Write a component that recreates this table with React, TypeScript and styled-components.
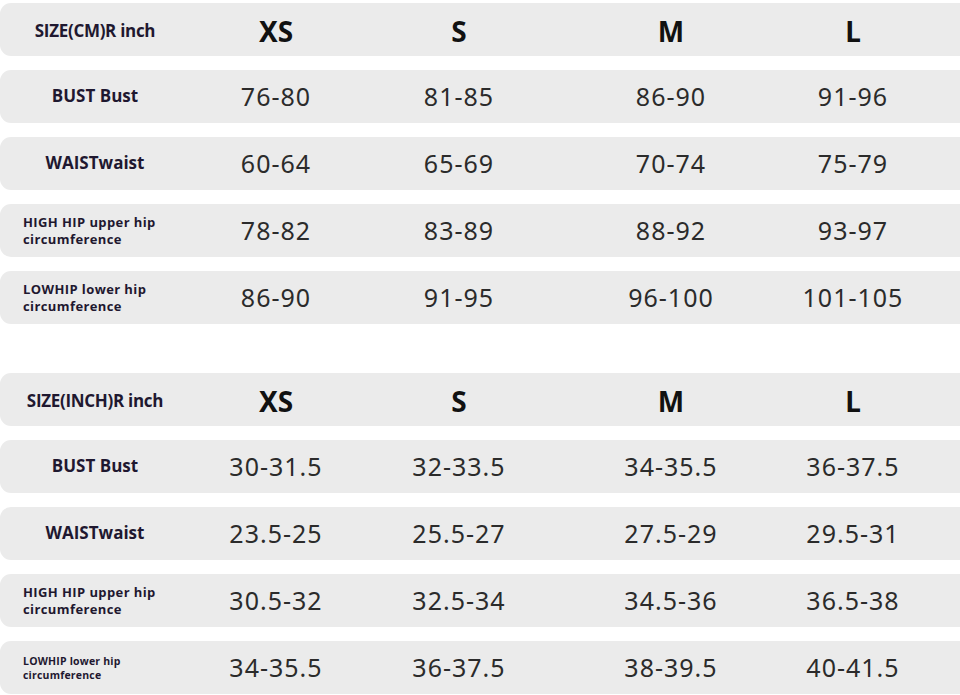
import React from "react";
import styled, { createGlobalStyle } from "styled-components";

type Row = {
  label: string[];
  size?: "lg" | "md" | "sm" | "xs";
  align?: "center" | "left";
  values: string[];
};

type Table = {
  title: string;
  rows: Row[];
};

const sizes = ["XS", "S", "M", "L"];

const tables: Table[] = [
  {
    title: "SIZE(CM)R inch",
    rows: [
      { label: ["BUST Bust"], size: "md", values: ["76-80", "81-85", "86-90", "91-96"] },
      { label: ["WAISTwaist"], size: "md", values: ["60-64", "65-69", "70-74", "75-79"] },
      {
        label: ["HIGH HIP upper hip", "circumference"],
        size: "sm",
        align: "left",
        values: ["78-82", "83-89", "88-92", "93-97"],
      },
      {
        label: ["LOWHIP lower hip", "circumference"],
        size: "sm",
        align: "left",
        values: ["86-90", "91-95", "96-100", "101-105"],
      },
    ],
  },
  {
    title: "SIZE(INCH)R inch",
    rows: [
      { label: ["BUST Bust"], size: "md", values: ["30-31.5", "32-33.5", "34-35.5", "36-37.5"] },
      { label: ["WAISTwaist"], size: "md", values: ["23.5-25", "25.5-27", "27.5-29", "29.5-31"] },
      {
        label: ["HIGH HIP upper hip", "circumference"],
        size: "sm",
        align: "left",
        values: ["30.5-32", "32.5-34", "34.5-36", "36.5-38"],
      },
      {
        label: ["LOWHIP lower hip", "circumference"],
        size: "xs",
        align: "left",
        values: ["34-35.5", "36-37.5", "38-39.5", "40-41.5"],
      },
    ],
  },
];

const GlobalStyle = createGlobalStyle`
  html, body {
    margin: 0;
    padding: 0;
    background: #ffffff;
  }
  body {
    font-family: "Noto Sans", "Open Sans", sans-serif;
  }
`;

const App: React.FunctionComponent = () => {
  return (
    <Page>
      <GlobalStyle />
      {tables.map((table) => (
        <ChartTable key={table.title}>
          <ChartRow>
            <LabelCell $shift={2}>
              <Label $size="lg">{table.title}</Label>
            </LabelCell>
            {sizes.map((s) => (
              <SizeCell key={s}>{s}</SizeCell>
            ))}
          </ChartRow>
          {table.rows.map((row) => (
            <ChartRow key={row.label.join(" ")}>
              <LabelCell $align={row.align} $shift={row.align === "left" ? 0 : -2}>
                <Label $size={row.size}>
                  {row.label.map((line) => (
                    <span key={line}>{line}</span>
                  ))}
                </Label>
              </LabelCell>
              {row.values.map((v, i) => (
                <ValueCell key={i}>{v}</ValueCell>
              ))}
            </ChartRow>
          ))}
        </ChartTable>
      ))}
    </Page>
  );
};

export default App;

const Page = styled.div`
  width: 960px;
  height: 695px;
  overflow: hidden;
  display: flex;
  flex-direction: column;
  gap: 49px;
  padding-top: 3px;
  box-sizing: border-box;
`;

const ChartTable = styled.div`
  display: flex;
  flex-direction: column;
  gap: 14px;
`;

const ChartRow = styled.div`
  height: 53px;
  display: grid;
  grid-template-columns: 190px 172px 194px 230px 134px 1fr;
  align-items: center;
  background: #ebebeb;
  border-radius: 11px 0 0 11px;
`;

const LabelCell = styled.div<{ $align?: "center" | "left"; $shift?: number }>`
  display: flex;
  justify-content: ${(p) => (p.$align === "left" ? "flex-start" : "center")};
  padding-left: ${(p) => (p.$align === "left" ? "23px" : "0")};
  margin-top: ${(p) => p.$shift ?? 0}px;
`;

const labelFont = {
  lg: { size: "17px", spacing: "-0.3px", line: "20px" },
  md: { size: "17px", spacing: "0", line: "20px" },
  sm: { size: "13px", spacing: "0.4px", line: "17px" },
  xs: { size: "10.5px", spacing: "0.2px", line: "14px" },
};

const Label = styled.div<{ $size?: "lg" | "md" | "sm" | "xs" }>`
  display: flex;
  flex-direction: column;
  font-family: "Open Sans", "Noto Sans", sans-serif;
  font-weight: 700;
  color: #1f1830;
  white-space: nowrap;
  font-size: ${(p) => labelFont[p.$size ?? "md"].size};
  letter-spacing: ${(p) => labelFont[p.$size ?? "md"].spacing};
  line-height: ${(p) => labelFont[p.$size ?? "md"].line};
`;

const SizeCell = styled.div`
  text-align: center;
  font-family: "Noto Sans", "Open Sans", sans-serif;
  font-weight: 700;
  font-size: 28px;
  color: #111111;
  line-height: 1;
  padding-top: 2px;
`;

const ValueCell = styled.div`
  text-align: center;
  font-family: "Noto Sans", "Open Sans", sans-serif;
  font-weight: 400;
  font-size: 25px;
  letter-spacing: 1px;
  color: #2b2b2b;
  line-height: 1;
  padding-top: 0;
`;
